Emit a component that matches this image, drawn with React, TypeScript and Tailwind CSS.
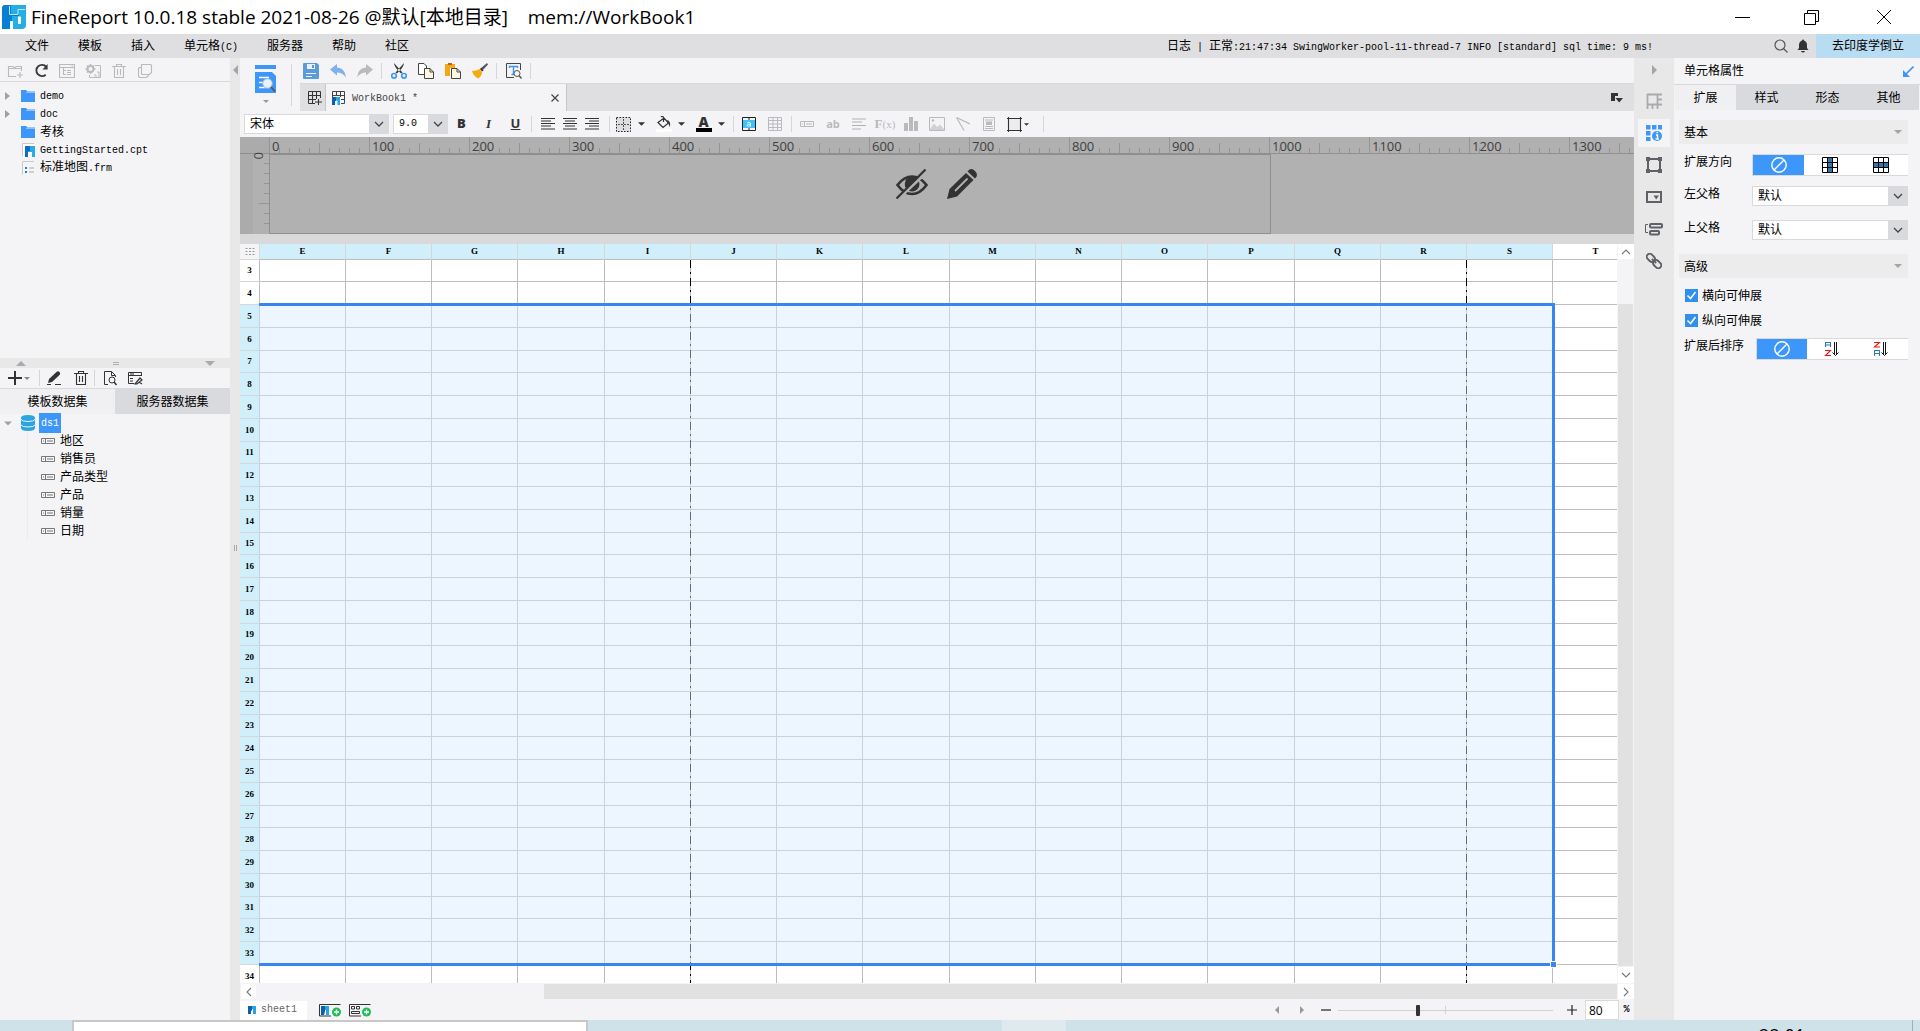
import React from "react";

type Kids = { children?: React.ReactNode };

const Ico = ({
  children,
  className = "size-4",
  box = "0 0 16 16",
}: Kids & { className?: string; box?: string }) => (
  <svg viewBox={box} className={"shrink-0 " + className} fill="none" aria-hidden="true">
    {children}
  </svg>
);

/* Latin text set in the small monospace face used next to CJK text */
const Mono = ({ children }: Kids) => <span className="font-['Liberation_Mono',monospace] text-[10px]">{children}</span>;

const Logo = ({ className = "h-6 w-6" }: { className?: string }) => (
  <Ico box="0 0 24 24" className={className}>
    <path d="M3 0H24V20Q24 24 20 24H0V4Q0 0 3 0Z" fill="#27ade5" />
    <path d="M3 0H9V9H17V11H10V24H0V4Q0 0 3 0Z" fill="#067fd4" />
    <path d="M7.500 1V9.500H16V4.500H23" stroke="#bfe6f8" strokeWidth="1" />
    <path d="M8 16H11V24H8ZM16 11.500H19V19H16Z" fill="#f4fbff" />
  </Ico>
);

const Down = ({ className = "h-[4px] w-[8px] fill-[#3c3c3c]" }: { className?: string }) => (
  <svg viewBox="0 0 8 4" className={"shrink-0 " + className} aria-hidden="true">
    <path d="M0 0H8L4 4Z" />
  </svg>
);

const IconButton = ({ label, className = "", children }: Kids & { label: string; className?: string }) => (
  <button type="button" aria-label={label} className={"flex shrink-0 items-center justify-center " + className}>
    {children}
  </button>
);

const Select = ({ label, options, className, mono }: { label: string; options: string[]; className: string; mono?: boolean }) => (
  <div className={"relative h-5 shrink-0 " + className}>
    <select
      aria-label={label}
      className={
        "block h-5 w-full appearance-none border border-[#d9d9dc] bg-white pl-[5px] text-black outline-none " +
        (mono ? "font-['Liberation_Mono',monospace] text-[10px]" : "text-xs")
      }
    >
      {options.map((o) => (
        <option key={o}>{o}</option>
      ))}
    </select>
    <span className="pointer-events-none absolute inset-y-0 right-0 flex w-5 items-center justify-center bg-[#d9dadd]">
      <Ico className="size-[10px]" box="0 0 10 10">
        <path d="M1 3L5 7L9 3" stroke="#444" strokeWidth="1.300" />
      </Ico>
    </span>
  </div>
);

function TitleBar() {
  return (
    <header className="flex h-[34px] shrink-0 items-center bg-white pl-[2px]">
      <Logo />
      <h1 className="ml-[5px] flex-1 text-[19px] leading-6 whitespace-pre text-black">
        FineReport 10.0.18 stable 2021-08-26 @默认[本地目录]    mem://WorkBook1
      </h1>
      <IconButton label="最小化" className="h-8 w-[70px]">
        <Ico><path d="M1 8.500H16" stroke="#000" /></Ico>
      </IconButton>
      <IconButton label="还原" className="h-8 w-[70px]">
        <Ico><path d="M.5 4.500H11.500V15.500H.5ZM3.500 4.500V1.500H14.500V12.500H11.500" stroke="#000" /></Ico>
      </IconButton>
      <IconButton label="关闭" className="h-8 w-[73px]">
        <Ico><path d="M1 1L15 15M15 1L1 15" stroke="#000" /></Ico>
      </IconButton>
    </header>
  );
}

function MenuBar() {
  return (
    <nav className="flex h-6 shrink-0 items-center bg-[#dfdfe1] pl-[25px]">
      <div className="flex flex-1 gap-[29px]">
        {["文件", "模板", "插入"].map((m) => (
          <button key={m} type="button">{m}</button>
        ))}
        <button type="button">单元格<Mono>(C)</Mono></button>
        {["服务器", "帮助", "社区"].map((m) => (
          <button key={m} type="button">{m}</button>
        ))}
      </div>
      <p className="mr-[119px] whitespace-pre">
        日志<Mono> | </Mono>正常<Mono>:21:47:34 SwingWorker-pool-11-thread-7 INFO [standard] sql time: 9 ms!</Mono>
      </p>
      <IconButton label="搜索" className="w-[18px]">
        <Ico className="size-[14px]" box="0 0 14 14">
          <circle cx="6" cy="6" r="5" stroke="#555" strokeWidth="1.200" />
          <path d="M9.500 9.500L13.500 13.500" stroke="#555" strokeWidth="1.300" />
        </Ico>
      </IconButton>
      <IconButton label="通知" className="mx-[7px] w-3">
        <Ico className="h-[14px] w-3" box="0 0 12 14">
          <path d="M6 0.500Q7 .5 7 1.500Q10 2.500 10 6V9L11.500 11H.5L2 9V6Q2 2.500 5 1.500Q5 .5 6 .5ZM4 12H8Q7.500 13.500 6 13.500Q4.500 13.500 4 12Z" fill="#333" />
        </Ico>
      </IconButton>
      <button type="button" className="h-6 w-[104px] bg-[#b8dcf1]">去印度学倒立</button>
    </nav>
  );
}

const Folder = () => (
  <Ico className="h-3 w-[14px]" box="0 0 14 12">
    <path d="M0 0H5L6.500 1.500H14V12H0Z" fill="#3d97fb" />
    <path d="M5 2.500H14" stroke="#8cc2fd" />
  </Ico>
);

const GridFile = () => (
  <Ico className="h-[14px] w-[14px]" box="0 0 14 14">
    <path d="M1.500 13.500V.5H13" stroke="#c9c9cb" />
    <rect x="2" y="1" width="12" height="13" fill="#fff" />
    <path d="M4 3H9V8H7V14H4Z" fill="#0a6fc2" />
    <path d="M9 3H14V14H11V9H7V8H9Z" fill="#27ade5" />
  </Ico>
);

const FormFile = () => (
  <Ico className="h-[14px] w-[14px]" box="0 0 14 14">
    <path d="M1.500 13.500V.5H13" stroke="#c9c9cb" />
    <rect x="2" y="1" width="12" height="13" fill="#f4f4f4" />
    <path d="M4 6H6V8H4ZM4 10H6V12H4Z" fill="#1b7fd0" />
    <path d="M8 7H13M8 11H13" stroke="#cfcfcf" strokeWidth="2" />
  </Ico>
);

function FilePanel() {
  const files: { arrow?: boolean; icon: React.ReactNode; text: React.ReactNode }[] = [
    { arrow: true, icon: <Folder />, text: <Mono>demo</Mono> },
    { arrow: true, icon: <Folder />, text: <Mono>doc</Mono> },
    { icon: <Folder />, text: "考核" },
    { icon: <GridFile />, text: <Mono>GettingStarted.cpt</Mono> },
    { icon: <FormFile />, text: <>标准地图<Mono>.frm</Mono></> },
  ];
  return (
    <section aria-label="模板" className="flex h-[300px] flex-col">
      <div className="flex h-6 shrink-0 items-center border-b border-[#d9d9db] pt-[2px] pl-[2px] text-[#b9babd]">
        <IconButton label="新建文件夹" className="w-[26px]">
          <Ico><path d="M9 13.500H1.500V3.500H6L7.500 5.500H14.500V8M1.500 5.500H7.500L9 3.500H14.500V5.500M13 9V15M10 12H16" stroke="currentColor" strokeWidth="1.100" /></Ico>
        </IconButton>
        <IconButton label="刷新" className="w-[26px] text-[#3a3a3c]">
          <Ico className="size-[15px]"><path d="M12.500 12.500A6 6 0 1 1 13 4" stroke="currentColor" strokeWidth="2" /><path d="M14.500 1V7H9Z" fill="currentColor" /></Ico>
        </IconButton>
        <IconButton label="资源管理器" className="w-[26px]">
          <Ico><path d="M.5 1.500H15.500V14.500H.5ZM.5 4.500H15.500M4.500 4.500V11.500H7M4.500 7.500H7M8 7.500H12M8 11.500H12M8 9.500H12M12.500 3H14" stroke="currentColor" strokeWidth="1.100" /></Ico>
        </IconButton>
        <IconButton label="设置" className="w-[26px]">
          <Ico><circle cx="5.500" cy="6" r="3" stroke="currentColor" strokeWidth="2" /><path d="M5.500 1V3M5.500 9V11M.5 6H2.500M8.500 6H10.500M2 2.500L3.500 4M9 2.500L7.500 4M2 9.500L3.500 8" stroke="currentColor" strokeWidth="1.500" /><path d="M10 2.500H15.500V14.500H4.500V12M9 12H11V14M12 9H14V14" stroke="currentColor" /></Ico>
        </IconButton>
        <IconButton label="删除" className="w-[26px]"><Trash /></IconButton>
        <IconButton label="复制" className="w-[26px]">
          <Ico><path d="M4.500 1.500H13.500Q14.500 1.500 14.500 2.500V9.500L12.500 11.500H5.500Q4.500 11.500 4.500 10.500ZM4.500 4.500H2.500L1.500 5.500V13.500L2.500 14.500H9.500L11.500 12.500V11.500" stroke="currentColor" strokeWidth="1.100" /></Ico>
        </IconButton>
      </div>
      <ul className="pt-[5px]">
        {files.map((f, i) => (
          <li key={i} className="flex h-[18px] items-center pl-[5px]">
            <span className="w-4">
              {f.arrow && <Ico className="h-2 w-[5px]" box="0 0 5 8"><path d="M0 0L5 4L0 8Z" fill="#a0a0a0" /></Ico>}
            </span>
            {f.icon}
            <span className="ml-[5px] leading-[18px]">{f.text}</span>
          </li>
        ))}
      </ul>
    </section>
  );
}

const Trash = () => (
  <Ico><path d="M1 3.500H15M5.500 3V1.500H10.500V3M3.500 4V14.500H12.500V4M6.500 6V12M9.500 6V12" stroke="currentColor" strokeWidth="1.100" /></Ico>
);

function DataPanel() {
  const fields = ["地区", "销售员", "产品类型", "产品", "销量", "日期"];
  return (
    <section aria-label="数据集" className="flex flex-1 flex-col">
      <div className="flex h-[10px] items-center justify-between bg-[#e8e8e8] pr-[15px] pl-4">
        <Down className="h-[5px] w-[10px] rotate-180 fill-[#a9a9ab]" />
        <span className="h-[3px] w-[6px] border-y border-[#b0b0b0]" />
        <Down className="h-[5px] w-[10px] fill-[#a9a9ab]" />
      </div>
      <div className="flex h-5 items-center text-[#333]">
        <IconButton label="新增" className="w-[39px] gap-[2px] pr-[2px]">
          <Ico className="size-[14px]" box="0 0 14 14"><path d="M7 0V14M0 7H14" stroke="currentColor" strokeWidth="2" /></Ico>
          <Down className="h-[3px] w-[6px] fill-[#888]" />
        </IconButton>
        <span className="h-4 w-px bg-[#d5d5d7]" />
        <IconButton label="编辑" className="w-[28px]">
          <Ico><path d="M2 13L3 9L10.500 2Q12 .5 13.500 2Q15 3.500 13.500 5L6 12Z" fill="currentColor" /><path d="M1 14.500H5M9 14.500H15" stroke="currentColor" /></Ico>
        </IconButton>
        <IconButton label="删除" className="w-[26px]"><Trash /></IconButton>
        <span className="h-4 w-px bg-[#d5d5d7]" />
        <IconButton label="预览" className="w-[30px]">
          <Ico><path d="M6 14.500H2.500V1.500H9.500L13.500 5.500V7M9.500 1.500V5.500H13" stroke="currentColor" /><circle cx="10" cy="10" r="3" stroke="currentColor" /><path d="M12 12L14.500 15" stroke="currentColor" strokeWidth="1.500" /></Ico>
        </IconButton>
        <IconButton label="连接" className="w-5">
          <Ico><path d="M7 13.500H1.500V2.500H14.500V6M1.500 5.500H14.500M3 4H7M3 8.500H6M3 11H6" stroke="currentColor" /><path d="M8 14L13 8L15 10L10 14ZM12 12L15 14" stroke="currentColor" strokeWidth="1.200" /></Ico>
        </IconButton>
      </div>
      <div role="tablist" className="flex h-[26px] border-t border-[#d9d9db]">
        <button type="button" role="tab" aria-selected="true" className="flex-1 bg-[#f0f0f2]">模板数据集</button>
        <button type="button" role="tab" aria-selected="false" className="flex-1 bg-[#d9dadd]">服务器数据集</button>
      </div>
      <div className="flex h-[18px] items-center pl-1">
        <Down className="mr-[9px] h-[5px] w-2 fill-[#a0a0a0]" />
        <Ico className="h-4 w-[14px]" box="0 0 14 16">
          <path d="M0 3Q0 0 7 0Q14 0 14 3V13Q14 16 7 16Q0 16 0 13Z" fill="#2ba4e0" />
          <path d="M0 4.500Q1 6.500 7 6.500Q13 6.500 14 4.500M0 10Q1 12 7 12Q13 12 14 10" stroke="#e5f5fd" />
        </Ico>
        <span className="ml-1 bg-[#3d97fb] px-[2px] leading-[18px] text-white"><Mono>ds1</Mono></span>
      </div>
      <ul className="ml-[27px] border-l border-[#ececef]">
        {fields.map((f) => (
          <li key={f} className="flex h-[18px] items-center pl-[13px] leading-[18px]">
            <Ico className="mr-[5px] h-[6px] w-[14px]" box="0 0 14 6">
              <path d="M.5 .5H13.500V5.500H.5ZM4.500 .5V5.500M6 3H12M2 3H3" stroke="#77787a" />
            </Ico>
            {f}
          </li>
        ))}
      </ul>
    </section>
  );
}

const Sep = ({ className }: { className: string }) => <span className={"w-px shrink-0 bg-[#d6d6d8] " + className} />;

function TopTools() {
  const b = "h-6 w-[27px]";
  return (
    <div className="flex h-[25px] items-center">
      <IconButton label="保存" className={b}>
        <Ico><path d="M0 1Q0 0 1 0H14L16 2V15Q16 16 15 16H1Q0 16 0 15Z" fill="#5b9bdc" /><path d="M4 1H12V6H4Z" fill="#e9f2fb" /><path d="M9 2H11V5H9Z" fill="#5b9bdc" /><path d="M3 10.500H13M3 13.500H9" stroke="#e9f2fb" strokeWidth="1.200" /></Ico>
      </IconButton>
      <IconButton label="撤销" className={b}>
        <Ico><path d="M0 6.500L7 1V4.500Q15 5 16 14.500Q12.500 9.500 7 9.500V12.500Z" fill="#7fb2ea" /></Ico>
      </IconButton>
      <IconButton label="重做" className={b}>
        <Ico><path d="M16 6.500L9 1V4.500Q1 5 0 14.500Q3.500 9.500 9 9.500V12.500Z" fill="#b9babc" /></Ico>
      </IconButton>
      <Sep className="mx-[3px] h-4" />
      <IconButton label="剪切" className={b}>
        <Ico><path d="M3 0Q3 4 10 10.500L11.500 9.500ZM13 0Q13 4 6 10.500L4.500 9.500Z" fill="#3c3c3c" /><circle cx="3" cy="12.800" r="2.300" stroke="#3d97fb" strokeWidth="1.700" /><circle cx="13" cy="12.800" r="2.300" stroke="#3d97fb" strokeWidth="1.700" /></Ico>
      </IconButton>
      <IconButton label="复制" className={b}>
        <Ico><path d="M.5 .5H6L8.500 3V11.500H.5Z" fill="#fff" stroke="#444" /><path d="M6.500 5.500H12L15.500 9V15.500H6.500Z" fill="#fff7e0" stroke="#444" /><path d="M12 5.500V9H15.500" stroke="#444" /></Ico>
      </IconButton>
      <IconButton label="粘贴" className={b}>
        <Ico><path d="M0 1H10V5H5V13H0Z" fill="#f2a916" /><path d="M3 0H7V2H3Z" fill="#b4691a" /><path d="M6.500 5.500H12L15.500 9V15.500H6.500Z" fill="#fff7e0" stroke="#444" /><path d="M12 5.500V9H15.500" stroke="#444" /></Ico>
      </IconButton>
      <IconButton label="格式刷" className={b}>
        <Ico><path d="M15 0L16 1.500L10.500 7.500L8.500 5.500Z" fill="#5a5560" /><path d="M9 5L11.500 7.500L10 8.500L8 6Z" fill="#333" /><path d="M0 7.500Q4 8.500 7.500 6L10 9Q10 13 6 15.500Q1 13 0 7.500Z" fill="#f4ab14" /></Ico>
      </IconButton>
      <Sep className="mx-[3px] h-4" />
      <IconButton label="查找" className={b}>
        <Ico><path d="M8 14.500H.5V.5H14.500V7" stroke="#444" /><path d="M3.500 5V3.500H11.500V5M7.500 3.500V11.500M5.500 11.500H8" stroke="#3d97fb" strokeWidth="1.400" /><circle cx="11" cy="10.500" r="3" fill="#f4f4f7" stroke="#555" /><path d="M13 12.500L15.500 15.500" stroke="#555" strokeWidth="1.500" /></Ico>
      </IconButton>
      <Sep className="mx-[3px] h-4" />
    </div>
  );
}

function FileTabs() {
  return (
    <div className="ml-[3px] flex h-7 border-t border-[#d9d9db] bg-[#dfdfe1]">
      <IconButton label="新建模板" className="w-[26px] border-r border-[#c6c6c9] pl-1">
        <Ico className="size-[14px]" box="0 0 14 14"><path d="M7 12.500H.5V.5H12.500V7M.5 4.500H12.500M.5 8.500H8M4.500 .5V12.500M8.500 .5V8M10.500 8V14M7 11H14" stroke="#333" /></Ico>
      </IconButton>
      <div className="flex w-[241px] items-center border-r border-[#c6c6c9] bg-[#f4f4f7] pr-[3px] pl-[6px]">
        <Ico className="size-[14px]" box="0 0 14 14"><path d="M.5 6V.5H12.500V12.500H9M.5 4.500H12.500M9 8.500H12.500M4.500 .5V5M8.500 .5V6" stroke="#444" /><path d="M0 6H4V10H3V14H0Z" fill="#0d5fae" /><path d="M4 6H8V14H5.500V9.500H4Z" fill="#27a4e5" /></Ico>
        <span className="ml-[6px] flex-1 text-[#444]"><Mono>WorkBook1 *</Mono></span>
        <IconButton label="关闭" className="size-4">
          <Ico className="size-2" box="0 0 8 8"><path d="M.5 .5L7.500 7.500M7.500 .5L.5 7.500" stroke="#444" strokeWidth="1.200" /></Ico>
        </IconButton>
      </div>
      <IconButton label="标签列表" className="ml-auto w-[34px]">
        <Ico className="h-[10px] w-3" box="0 0 12 10"><path d="M0 0H7V3H4V8H0Z" fill="#333" /><path d="M4.500 5H12L8.200 9.500Z" fill="#333" /></Ico>
      </IconButton>
    </div>
  );
}

const Align = ({ d, className = "text-[#333]" }: { d: string; className?: string }) => (
  <Ico className={"h-3 w-[14px] " + className} box="0 0 14 12"><path d={d} stroke="currentColor" strokeWidth="1.100" /></Ico>
);

const Pair = ({ label, children }: Kids & { label: string }) => (
  <button type="button" aria-label={label} className="flex h-6 w-10 shrink-0 items-center">
    <span className="flex w-[21px] justify-center">{children}</span>
    <span className="flex w-[14px] justify-center"><Down className="h-[4px] w-[7px] fill-[#333]" /></span>
  </button>
);

function FormatBar() {
  const t = "h-6 w-[27px] text-[13px] text-[#333]";
  const a = "h-6 w-[22px]";
  const g = "h-6 w-[26px] text-[#b9babd]";
  return (
    <div className="flex h-[26px] shrink-0 items-center pl-1">
      <Select label="字体" options={["宋体"]} className="w-[145px]" />
      <Select label="字号" options={["9.0"]} className="ml-1 w-[55px]" mono />
      <IconButton label="加粗" className={t}><b className="font-black">B</b></IconButton>
      <IconButton label="倾斜" className={t}><i className="font-['Liberation_Serif',serif] font-bold">I</i></IconButton>
      <IconButton label="下划线" className={t}><u className="font-bold">U</u></IconButton>
      <Sep className="mr-[5px] ml-[2px] h-4" />
      <IconButton label="左对齐" className={a}><Align d="M0 .5H14M0 3H10M0 5.500H14M0 8H10M0 11H14" /></IconButton>
      <IconButton label="居中" className={a}><Align d="M0 .5H14M2 3H12M0 5.500H14M2 8H12M0 11H14" /></IconButton>
      <IconButton label="右对齐" className={a}><Align d="M0 .5H14M4 3H14M0 5.500H14M4 8H14M0 11H14" /></IconButton>
      <Sep className="mr-[3px] ml-[6px] h-4" />
      <Pair label="边框"><Ico className="size-[15px]" box="0 0 15 15"><rect width="15" height="15" fill="#dedee2" /><path d="M.5 .5H14.500V14.500H.5Z" stroke="#222" strokeDasharray="1.500 1.500" /><path d="M7.500 2V13M2 7.500H13" stroke="#555" strokeDasharray="2 1" /></Ico></Pair>
      <Pair label="填充颜色"><Ico><path d="M5 1Q7 -1 7.500 2V6M2 6.500L8 2L12.500 7L7 11.500Z" stroke="#333" strokeWidth="1.200" /><path d="M11 4Q15 5 14 11Q13 9 12 7Z" fill="#333" /><rect y="13" width="16" height="3" fill="#fff" /></Ico></Pair>
      <Pair label="字体颜色">
        <span className="flex w-4 flex-col items-center border-b-4 border-black text-[14px] leading-3 font-black text-[#333]">A</span>
      </Pair>
      <Sep className="mr-[2px] h-4" />
      <IconButton label="合并单元格" className={g}><Ico className="size-[14px]" box="0 0 14 14"><path d="M.5 .5H13.500V13.500H.5ZM7 .5V3M7 11V13.500" stroke="#222" /><rect x="1" y="3" width="12" height="8" fill="#3ec2fb" /><path d="M5 6Q7 4.500 8.500 6V9.500M8.500 7Q5 7 5 8.500Q6 10 8.500 8.500" stroke="#e9faff" /></Ico></IconButton>
      <IconButton label="拆分单元格" className={g}><Ico className="size-[14px]" box="0 0 14 14"><path d="M.5 .5H13.500V13.500H.5ZM.5 3.500H13.500M.5 7H13.500M.5 10.500H13.500M5 .5V13.500M9.500 .5V13.500" stroke="currentColor" /></Ico></IconButton>
      <Sep className="mr-[2px] ml-[3px] h-4" />
      <IconButton label="数据列" className={g}><Ico className="h-[6px] w-[14px]" box="0 0 14 6"><path d="M.5 .5H13.500V5.500H.5ZM4.500 .5V5.500M6 3H12M2 3H3" stroke="currentColor" /></Ico></IconButton>
      <IconButton label="普通文本" className={g + " text-[11px] font-bold"}>ab</IconButton>
      <IconButton label="富文本" className={g}><Align className="text-[#b0b1b4]" d="M0 1H14M0 4H10M0 7.500H14M0 11H9" /></IconButton>
      <IconButton label="公式" className={g}><span className="font-['Liberation_Serif',serif] text-[13px] font-bold">F<span className="text-[11px] font-normal">(x)</span></span></IconButton>
      <IconButton label="图表" className={g}><Ico className="size-[14px]" box="0 0 14 14"><path d="M0 6H4V14H0ZM5 0H9V14H5ZM10 4H14V14H10Z" fill="currentColor" /></Ico></IconButton>
      <IconButton label="图片" className={g}><Ico className="h-[14px] w-4" box="0 0 16 14"><path d="M.5 .5H15.500V13.500H.5Z" stroke="currentColor" /><path d="M1 12L5 6.500L8 10L11 7.500L15 12V13H1Z" fill="#d0d1d4" /><circle cx="4" cy="3.500" r="1.200" fill="currentColor" /></Ico></IconButton>
      <IconButton label="斜线" className={g}><Ico className="size-[14px]" box="0 0 14 14"><path d="M.5 .5L14 7M.5 .5L8 13.500" stroke="currentColor" strokeWidth="1.200" /></Ico></IconButton>
      <IconButton label="子报表" className={g}><Ico className="h-[14px] w-3" box="0 0 12 14"><path d="M.5 .5H11.500V13.500H.5ZM2 3H10M2 11.500H10M2 9.500H10" stroke="currentColor" /><rect x="3" y="4.500" width="6" height="3.500" fill="currentColor" /></Ico></IconButton>
      <IconButton label="悬浮元素" className="h-6 w-[31px] gap-[2px] text-[#333]"><Ico className="size-[15px]" box="0 0 15 15"><rect x="2" y="2" width="11" height="11" fill="#ececee" /><path d="M0 1.500H15M0 13.500H15M1.500 0V15M13.500 0V15" stroke="currentColor" strokeWidth="1.100" /></Ico><Down className="h-[3px] w-[5px] fill-[#333]" /></IconButton>
      <Sep className="ml-[10px] h-4" />
    </div>
  );
}

const MARKS = [0, 100, 200, 300, 400, 500, 600, 700, 800, 900, 1000, 1100, 1200, 1300];

function ParamPane() {
  return (
    <div className="flex h-[97px] shrink-0 flex-col bg-[#b1b1b1]">
      <div className="flex h-[17px] border-b border-[#8f8f8f]">
        <div className="w-[29px] shrink-0 bg-[#ababab]" />
        <div className="relative min-w-0 flex-1 overflow-x-clip bg-[#b0b0b0]">
          <svg className="absolute inset-0 size-full" aria-hidden="true">
            <defs>
              <pattern id="rule" width="100" height="16" patternUnits="userSpaceOnUse">
                <path d="M.5 0V16M10.500 11V16M20.500 11V16M30.500 11V16M40.500 11V16M50.500 6V16M60.500 11V16M70.500 11V16M80.500 11V16M90.500 11V16" stroke="#949494" />
              </pattern>
            </defs>
            <rect width="100%" height="16" fill="url(#rule)" />
          </svg>
          <div className="relative flex">
            {MARKS.map((m) => (
              <span key={m} className="min-w-0 shrink-0 basis-[100px] pl-[3px] font-['Open_Sans',sans-serif] text-[13px] leading-[18px] text-[#3f3f3f] last:shrink">{m}</span>
            ))}
          </div>
        </div>
      </div>
      <div className="flex min-h-0 flex-1">
        <div className="w-[13px] shrink-0 bg-[#ababab]" />
        <div className="relative w-[17px] shrink-0 border-r border-[#8f8f8f]">
          <svg className="absolute inset-0 size-full" aria-hidden="true">
            <path d="M11 9.500H16M11 19.500H16M11 29.500H16M11 39.500H16M6 49.500H16M11 59.500H16M11 69.500H16" stroke="#949494" />
          </svg>
          <span className="block h-2 w-3 rotate-90 font-['Open_Sans',sans-serif] text-[13px] leading-2 text-[#3f3f3f]">0</span>
        </div>
        <div className="relative min-w-0 flex-1">
          <div className="h-full w-[1001px] border border-l-0 border-[#8f8f8f]" />
          <div className="absolute inset-y-0 right-[32px] left-0 flex items-start justify-center gap-[19px] pt-[15px]">
            <IconButton label="隐藏参数面板">
              <Ico className="h-[30px] w-8" box="0 0 32 30">
                <path d="M1.500 16Q8 7.500 16 7.500Q24 7.500 30.500 16Q24 25 16 25Q8 25 1.500 16Z" stroke="#333" strokeWidth="2.600" />
                <circle cx="16" cy="15" r="7.500" fill="#333" />
                <path d="M9 12Q6 16 10 21" stroke="#b1b1b1" strokeWidth="1.500" />
                <path d="M2 30L32 2" stroke="#b1b1b1" strokeWidth="3" />
                <path d="M.5 29.500L29.500 .5" stroke="#333" strokeWidth="2.200" />
              </Ico>
            </IconButton>
            <IconButton label="编辑参数面板">
              <Ico className="size-[30px]" box="0 0 30 30">
                <path d="M0 30L2.500 20L19 4L26.500 11L10 27.500Z" fill="#333" />
                <path d="M20.500 2.500Q24 -2 28 2Q32 6 28 9.500Z" fill="#333" />
                <path d="M8 22L20.500 9.500" stroke="#b1b1b1" strokeWidth="1.800" />
              </Ico>
            </IconButton>
          </div>
        </div>
      </div>
    </div>
  );
}

const COLS = "EFGHIJKLMNOPQRST".split("");
const ROWS = Array.from({ length: 32 }, (_, i) => i + 3);

function Sheet() {
  return (
    <div className="relative min-w-0 flex-1 overflow-hidden bg-white">
      <table className="w-max table-fixed border-separate border-spacing-0 font-['Liberation_Serif',serif] text-[9px] leading-[9px] text-black">
        <thead>
          <tr className="h-4">
            <th className="w-5 min-w-5 border-r border-b border-[#d9d9db] bg-[#f4f4f7] p-0">
              <Ico className="mx-auto h-[7px] w-[10px]" box="0 0 10 7"><path d="M.5 .5H10M.5 3.500H10M.5 6.500H10" stroke="#999" strokeDasharray="2 1.500" /></Ico>
            </th>
            {COLS.map((c) => (
              <th
                key={c}
                scope="col"
                className={
                  "border-r border-b border-r-[#d3d6da] border-b-[#bdbdbd] p-0 font-bold " +
                  (c === "T" ? "bg-white " : "bg-[#d0effa] ") +
                  ("HLP".includes(c) ? "w-[87px] min-w-[87px]" : "w-[86px] min-w-[86px]")
                }
              >
                {c}
              </th>
            ))}
          </tr>
        </thead>
        <tbody>
          {ROWS.map((r) => (
            <tr key={r} className={r % 4 === 3 ? "h-[22px]" : "h-[23px]"}>
              <th
                scope="row"
                className={
                  "border-r border-b border-r-[#bdbdbd] border-b-[#d3d6da] p-0 font-bold " + (r > 4 && r < 34 ? "bg-[#d0effa]" : "bg-white")
                }
              >
                {r}
              </th>
              {COLS.map((c) => (
                <td key={c} className="border-r border-b border-[#bdbdbd] p-0" />
              ))}
            </tr>
          ))}
        </tbody>
      </table>
      {/* page-break guides */}
      <svg className="absolute top-4 left-0 size-full" aria-hidden="true">
        <path d="M450.500 0V800M1226.500 0V800" stroke="#000" strokeDasharray="8 4 2 4" />
      </svg>
      {/* current selection */}
      <div className="absolute top-[59px] left-[19px] h-[663px] w-[1296px] border-y-3 border-r-3 border-[#3685f2] bg-[#d7e9fd]/45 bg-clip-padding">
        <span className="absolute -right-1 -bottom-1 size-[5px] bg-[#3685f2] outline outline-white" />
      </div>
    </div>
  );
}

const Chevron = ({ d }: { d: string }) => (
  <Ico className="size-[10px]" box="0 0 10 10"><path d={d} stroke="#777" strokeWidth="1.100" /></Ico>
);

const AddBadge = () => (
  <>
    <circle cx="17.500" cy="8" r="4.500" fill="#1fbd54" />
    <path d="M17.500 5.500V10.500M15 8H20" stroke="#fff" strokeWidth="1.400" />
  </>
);

function StatusBar() {
  return (
    <div className="flex h-5 shrink-0 items-center">
      <button type="button" className="flex h-[19px] w-[67px] items-center gap-[5px] bg-white pl-2 text-[#666]">
        <Ico className="size-2" box="0 0 8 8"><path d="M0 0H4V4L3 5V8H0Z" fill="#0d5fae" /><path d="M4 0H8V8H5V3H4Z" fill="#27a4e5" /></Ico>
        <Mono>sheet1</Mono>
      </button>
      <IconButton label="新增模板" className="ml-3">
        <Ico className="h-[13px] w-[22px]" box="0 0 22 13"><path d="M12 12H.5V.5H21.500" stroke="#333" /><path d="M2 2H6V7L5 11H2Z" fill="#0d5fae" /><path d="M6 2H10V11H7V6H6Z" fill="#27a4e5" /><AddBadge /></Ico>
      </IconButton>
      <IconButton label="新增聚合块" className="ml-2">
        <Ico className="h-[13px] w-[22px]" box="0 0 22 13"><path d="M12 12H.5V.5H21.500M2.500 2.500H5.500V5H2.500ZM7.500 2.500H10.500V5H7.500ZM2.500 7.500H10.500V9.500H2.500Z" stroke="#333" /><AddBadge /></Ico>
      </IconButton>
      <div className="ml-auto flex items-center">
        <IconButton label="上一页" className="w-[25px]"><Ico className="h-2 w-1" box="0 0 4 8"><path d="M4 0V8L0 4Z" fill="#999" /></Ico></IconButton>
        <IconButton label="下一页" className="w-[25px]"><Ico className="h-2 w-1" box="0 0 4 8"><path d="M0 0V8L4 4Z" fill="#999" /></Ico></IconButton>
        <IconButton label="缩小" className="mx-[7px]"><Ico className="size-[10px]" box="0 0 10 10"><path d="M0 5H10" stroke="#222" strokeWidth="1.200" /></Ico></IconButton>
        <div className="relative flex h-5 w-[215px] items-center">
          <span className="absolute left-[107px] h-2 w-px bg-[#d0d0d3]" />
          <input
            type="range"
            aria-label="缩放"
            min="0"
            max="100"
            defaultValue="37"
            className="w-full appearance-none bg-transparent [&::-webkit-slider-runnable-track]:h-px [&::-webkit-slider-runnable-track]:bg-[#d0d0d3] [&::-webkit-slider-thumb]:-mt-[5px] [&::-webkit-slider-thumb]:h-[11px] [&::-webkit-slider-thumb]:w-[4px] [&::-webkit-slider-thumb]:appearance-none [&::-webkit-slider-thumb]:rounded-[1px] [&::-webkit-slider-thumb]:bg-[#333]"
          />
        </div>
        <IconButton label="放大" className="ml-[14px]"><Ico className="size-[10px]" box="0 0 10 10"><path d="M0 5H10M5 0V10" stroke="#222" strokeWidth="1.200" /></Ico></IconButton>
        <input aria-label="缩放比例" defaultValue="80" className="ml-2 h-5 w-[34px] border border-[#d9d9db] bg-white pl-[3px] text-xs outline-none" />
        <span className="w-[15px] text-center font-['Liberation_Mono',monospace] text-[10px] font-bold">%</span>
      </div>
    </div>
  );
}

function Workspace() {
  return (
    <main className="flex min-w-0 flex-1 flex-col">
      <div className="flex h-[53px] shrink-0">
        <button type="button" aria-label="预览" className="flex w-[51px] flex-col items-center pt-[7px]">
          <Ico className="h-7 w-[21px]" box="0 0 21 28">
            <path d="M0 0H21V4H0ZM0 7H17L21 11V28H0Z" fill="#3d97fb" />
            <path d="M4 12.500H14M4 17.500H9M4 22.500H10" stroke="#fff" strokeWidth="1.500" />
            <circle cx="12.500" cy="18.500" r="4.800" fill="#eaf3fb" stroke="#9cb8cf" />
            <path d="M16 22L20 26.500" stroke="#555" strokeWidth="1.800" />
          </Ico>
          <Down className="mt-[7px] h-[3px] w-[6px] fill-[#999]" />
        </button>
        <Sep className="mt-[6px] h-[42px]" />
        <div className="ml-[5px] flex min-w-0 flex-1 flex-col">
          <TopTools />
          <FileTabs />
        </div>
      </div>
      <FormatBar />
      <ParamPane />
      <div className="h-[10px] shrink-0 bg-[#d9d9db]" />
      <div className="flex min-h-0 flex-1">
        <Sheet />
        <div className="flex w-[17px] shrink-0 flex-col items-center">
          <IconButton label="向上滚动" className="h-[15px] w-4 bg-white"><Chevron d="M1 7L5 3L9 7" /></IconButton>
          <div className="mt-[45px] w-[15px] flex-1 bg-[#e1e1e1]" />
          <IconButton label="向下滚动" className="mt-px h-4 w-4 bg-white"><Chevron d="M1 3L5 7L9 3" /></IconButton>
        </div>
      </div>
      <div className="flex h-[17px] shrink-0 items-center pl-px">
        <IconButton label="向左滚动" className="h-[15px] w-[15px] bg-white"><Chevron d="M7 1L3 5L7 9" /></IconButton>
        <div className="ml-[288px] h-[15px] flex-1 bg-[#e1e1e1]" />
        <IconButton label="向右滚动" className="ml-px h-[15px] w-4 bg-white"><Chevron d="M3 1L7 5L3 9" /></IconButton>
      </div>
      <StatusBar />
    </main>
  );
}

function SideStrip() {
  const c = "h-8 w-8";
  return (
    <aside className="flex w-10 shrink-0 flex-col items-center bg-[#e8e8e8] text-[#5f6068]">
      <IconButton label="收起" className="h-[27px] w-8 pb-[3px]"><Ico className="h-[10px] w-[5px]" box="0 0 5 10"><path d="M0 0L5 5L0 10Z" fill="#a5a5a8" /></Ico></IconButton>
      <IconButton label="单元格元素" className={c + " text-[#a9aaad]"}>
        <Ico><path d="M1 1.500H16M1.500 1V16M1 11.500H16M11.500 1V16M12 6.500H16M6.500 12V16" stroke="currentColor" strokeWidth="1.800" /></Ico>
      </IconButton>
      <IconButton label="单元格属性" className="my-[2px] h-7 w-8 bg-[#f4f4f7]">
        <Ico><path d="M0 0H4.500V4.500H0ZM6 0H10.500V4.500H6ZM12 0H16V4.500H12ZM0 6H4.500V10.500H0ZM0 12H4.500V16H0Z" fill="#3d97fb" /><circle cx="11" cy="11" r="5" fill="#3d97fb" /><path d="M10 10H11.500V14M9.500 14H13M10.500 7.500H12" stroke="#fff" strokeWidth="1.400" /></Ico>
      </IconButton>
      <IconButton label="悬浮元素" className={c}><Ico><path d="M2 2H14V14H2Z" stroke="currentColor" strokeWidth="2" /><path d="M0 0H4V4H0ZM12 0H16V4H12ZM0 12H4V16H0ZM12 12H16V16H12Z" fill="currentColor" /></Ico></IconButton>
      <IconButton label="控件设置" className={c}><Ico><path d="M1 3H15V13H1Z" stroke="currentColor" strokeWidth="2" /><path d="M7.500 6.500H13L10.200 10.500Z" fill="currentColor" /></Ico></IconButton>
      <IconButton label="条件属性" className={c}><Ico className="h-4 w-[18px]" box="0 0 18 16"><path d="M3 3.500H.5V11.500H3" stroke="currentColor" /><rect x="5" y="3" width="12" height="3.500" rx="1" stroke="currentColor" strokeWidth="2" /><rect x="5" y="10" width="9" height="3.500" rx="1" stroke="currentColor" strokeWidth="2" /></Ico></IconButton>
      <IconButton label="超级链接" className={c}>
        <Ico><g stroke="currentColor" strokeWidth="1.900" transform="rotate(45 8 8)"><rect x="-1" y="5" width="9" height="6" rx="3" /><rect x="8" y="5" width="9" height="6" rx="3" /><path d="M5 8H11" /></g></Ico>
      </IconButton>
    </aside>
  );
}

const Section = ({ title, className }: { title: string; className: string }) => (
  <h3 className={"flex h-6 items-center justify-between bg-[#ececec] pr-[6px] pl-[5px] " + className}>
    <span className="pt-[2px]">{title}</span>
    <Down className="h-[4px] w-2 fill-[#a5a5a8]" />
  </h3>
);

const Forbid = () => (
  <Ico><circle cx="8" cy="8" r="7.200" stroke="#fff" strokeWidth="1.400" /><path d="M3 13L13 3" stroke="#fff" strokeWidth="1.400" /></Ico>
);

const Grid3 = ({ d }: { d: string }) => (
  <Ico><rect width="16" height="16" fill="#fff" /><path d={d} fill="#2f78a8" /><path d="M.5 .5H15.500V15.500H.5ZM.5 5.500H15.500M.5 10.500H15.500M5.500 .5V15.500M10.500 .5V15.500" stroke="#000" /></Ico>
);

const SortIcon = ({ up, down, a, z }: { up: string; down: string; a: string; z: string }) => (
  <Ico>
    <path d={up} stroke={a} strokeWidth="1.100" />
    <path d={down} stroke={z} strokeWidth="1.100" />
    <path d="M10.500 1V14M12.500 1V14M8.500 11.500L11.500 14.500L14.500 11.500" stroke="#111" />
  </Ico>
);

function Segments({ className, items }: { className: string; items: { label: string; icon: React.ReactNode }[] }) {
  return (
    <div className={"flex h-[22px] shrink-0 border-y border-l border-[#d9d9dc] bg-white pr-[2px] " + className}>
      {items.map((it, i) => (
        <IconButton key={it.label} label={it.label} className={i === 0 ? "flex-1 bg-[#3d97fb]" : "flex-1"}>
          {it.icon}
        </IconButton>
      ))}
    </div>
  );
}

function Properties() {
  const row = "flex items-start justify-between pl-[5px] ";
  return (
    <aside className="flex w-[246px] shrink-0 flex-col">
      <div className="flex h-[26px] items-center justify-between pr-[6px] pl-[10px]">
        <h2>单元格属性</h2>
        <Ico className="size-[11px]" box="0 0 11 11"><path d="M10.500 .5L2 9" stroke="#3d97fb" strokeWidth="1.600" /><path d="M0 4V11H7Z" fill="#3d97fb" /></Ico>
      </div>
      <div role="tablist" className="flex h-[26px] border-t border-[#d9d9db] px-px">
        {["扩展", "样式", "形态", "其他"].map((t, i) => (
          <button key={t} type="button" role="tab" aria-selected={i === 0} className={i === 0 ? "flex-1 bg-[#f0f0f2]" : "flex-1 bg-[#d9dadd]"}>
            {t}
          </button>
        ))}
      </div>
      <div className="flex flex-col pr-3 pl-[5px]">
        <Section title="基本" className="mt-[10px]" />
        <div className={row + "mt-[10px]"}>
          <span>扩展方向</span>
          <Segments
            className="w-[156px]"
            items={[
              { label: "不扩展", icon: <Forbid /> },
              { label: "纵向", icon: <Grid3 d="M6 1H10V15H6Z" /> },
              { label: "横向", icon: <Grid3 d="M1 6H15V10H1Z" /> },
            ]}
          />
        </div>
        <div className={row + "mt-[10px]"}>
          <span>左父格</span>
          <Select label="左父格" options={["默认"]} className="w-[156px]" />
        </div>
        <div className={row + "mt-[14px]"}>
          <span>上父格</span>
          <Select label="上父格" options={["默认"]} className="w-[156px]" />
        </div>
        <Section title="高级" className="mt-[14px]" />
        <div className="mt-[5px] flex flex-col pl-[6px]">
          {["横向可伸展", "纵向可伸展"].map((t) => (
            <label key={t} className="flex h-[25px] items-center gap-1">
              <span className="relative flex size-[13px]">
                <input type="checkbox" defaultChecked className="size-[13px] appearance-none bg-[#2f90f0]" />
                <Ico className="pointer-events-none absolute inset-0 size-[13px]" box="0 0 13 13"><path d="M2.500 6.500L5.500 9.500L10.500 3" stroke="#fff" strokeWidth="1.500" /></Ico>
              </span>
              {t}
            </label>
          ))}
        </div>
        <div className={row + "mt-[5px]"}>
          <span>扩展后排序</span>
          <Segments
            className="w-[152px]"
            items={[
              { label: "不排序", icon: <Forbid /> },
              { label: "升序", icon: <SortIcon a="#2f78a8" z="#f01414" up="M1.500 6V1.500H6.500V6M1.500 4H6.500" down="M1 9.500H6.500L1.500 14.500H7" /> },
              { label: "降序", icon: <SortIcon a="#f01414" z="#2f78a8" up="M1 1.500H6.500L1.500 6H7" down="M1.500 15V9.500H6.500V15M1.500 12.500H6.500" /> },
            ]}
          />
        </div>
      </div>
    </aside>
  );
}

function Taskbar() {
  return (
    <footer className="flex h-[11px] shrink-0 justify-between overflow-hidden bg-[#cfe1e9] pl-[72px]">
      <div className="w-[516px] border-x-2 border-t-2 border-[#c8c8c8] bg-white" />
      <div className="ml-[414px] w-16 bg-[#dfeaee]" />
      <div className="flex flex-1 justify-end">
        <time className="mt-[5px] mr-[107px] text-[18px] leading-5 text-black">22:01</time>
        <span className="mr-[7px] w-px bg-[#9fb0b8]" />
      </div>
    </footer>
  );
}

export default function App() {
  return (
    <div className="flex h-screen flex-col overflow-hidden bg-[#f4f4f7] font-['Open_Sans','Noto_Sans_CJK_SC',sans-serif] text-xs text-black">
      <TitleBar />
      <MenuBar />
      <div className="flex min-h-0 flex-1">
        <aside className="flex w-[230px] shrink-0 flex-col">
          <FilePanel />
          <DataPanel />
        </aside>
        <div className="flex w-[10px] shrink-0 flex-col items-center bg-[#e8e8e8]">
          <Ico className="mt-[7px] h-[10px] w-[5px]" box="0 0 5 10"><path d="M5 0V10L0 5Z" fill="#a5a5a8" /></Ico>
          <span className="my-auto h-[6px] w-[3px] border-x border-[#aaa]" />
        </div>
        <Workspace />
        <SideStrip />
        <Properties />
      </div>
      <Taskbar />
    </div>
  );
}
